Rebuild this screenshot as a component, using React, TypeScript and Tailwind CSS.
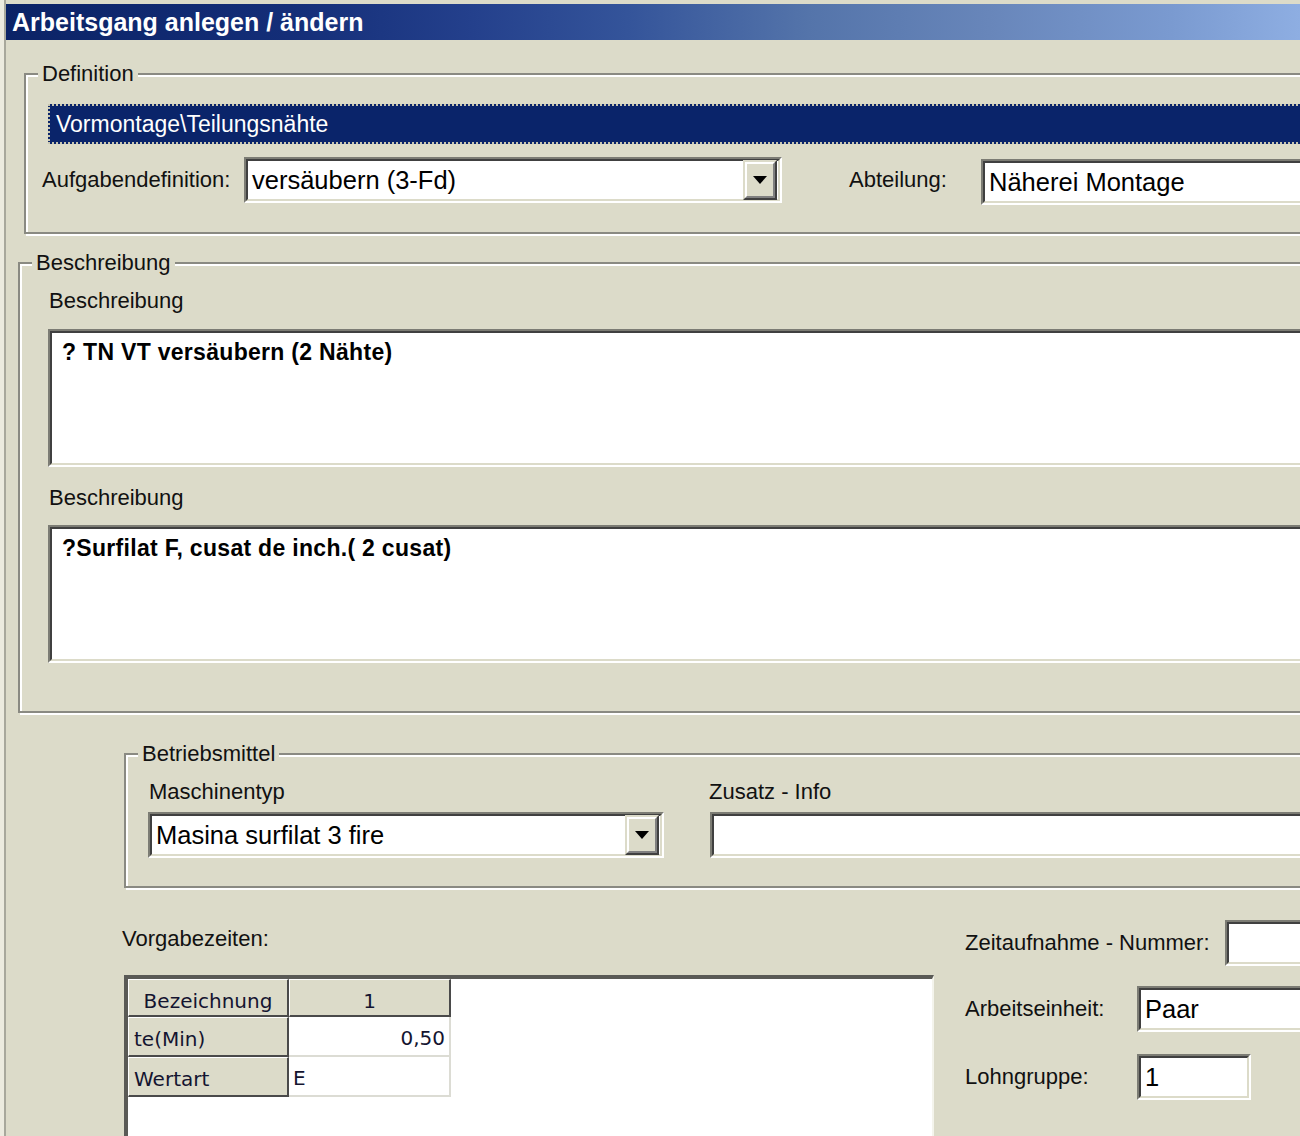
import type { ReactNode } from "react";

const face = "bg-[#dcdbc9]";

function Sunken({ className = "", children }: { className?: string; children?: ReactNode }) {
	return (
		<div className={"border-2 border-t-[#7c7c74] border-l-[#7c7c74] border-b-white border-r-white " + className}>
			<div className="h-full border-2 border-t-[#404040] border-l-[#404040] border-b-[#dcdbc9] border-r-[#dcdbc9] bg-white flex items-center">
				{children}
			</div>
		</div>
	);
}

function DropButton() {
	return (
		<div className="ml-auto mr-[1px] h-[40px] w-[34px] border-2 border-t-[#dcdbc9] border-l-[#dcdbc9] border-b-[#404040] border-r-[#404040] bg-[#dcdbc9]">
			<div className="h-full border-2 border-t-white border-l-white border-b-[#808080] border-r-[#808080] flex items-center justify-center">
				<svg width="14" height="8" viewBox="0 0 14 8">
					<path d="M0 0h14L7 8z" fill="#000" />
				</svg>
			</div>
		</div>
	);
}

function Group({
	title,
	className = "",
	inner = "",
	children,
}: {
	title: string;
	className?: string;
	inner?: string;
	children: ReactNode;
}) {
	return (
		<fieldset className={"border-2 border-[#8a8a82] shadow-[inset_2px_2px_0_#fff,2px_2px_0_#fff] mr-[-60px] " + className}>
			<legend className={"ml-[12px] px-[4px] text-[22px] leading-[26px] text-[#111] " + face}>{title}</legend>
			<div className={inner}>{children}</div>
		</fieldset>
	);
}

const label = "text-[22px] leading-[26px] text-[#111]";
const field = "text-[25.5px] leading-[28px] text-black pl-[4px]";
const memo = "self-start pt-[6px] pl-[10px] font-bold text-[23px] tracking-[0.3px] leading-[26px] text-black";
const head =
	"bg-[#dcdbc9] border-t border-l border-white border-r-2 border-b-2 border-r-[#4a4a4a] border-b-[#4a4a4a] flex items-center";

export default function App() {
	return (
		<div
			className={"w-[1300px] h-[1136px] overflow-hidden flex " + face}
			style={{ fontFamily: '"Liberation Sans", Arial, sans-serif' }}
		>
			<div className="w-[6px] shrink-0 bg-[#ecebdf] border-r-2 border-r-[#a8a89c]" />
			<div className="flex-1 flex flex-col min-w-0">
				<div className="mt-[4px] h-[36px] shrink-0 flex items-center pl-[6px] bg-[linear-gradient(to_right,#0b2366,#142e78_22%,#24408c_36%,#34549a_48%,#5474aa_62%,#6886ba_76%,#7a9ad0_90%,#8eaee2)]">
					<span className="text-white font-bold text-[25px] leading-none">Arbeitsgang anlegen / ändern</span>
				</div>

				<Group title="Definition" className="mt-[21px] ml-[18px]" inner="pl-[16px] pb-[28px]">
					<div className="mt-[17px] ml-[6px] h-[40px] bg-[#0a246a] border-2 border-dotted border-[#c8c6b0] flex items-center pl-[6px]">
						<span className="text-white text-[23px] leading-none">Vormontage\Teilungsnähte</span>
					</div>
					<div className="mt-[12px] flex items-center h-[48px]">
						<span className={label + " w-[202px]"}>Aufgabendefinition:</span>
						<Sunken className="w-[538px] h-[46px]">
							<span className={field}>versäubern (3-Fd)</span>
							<DropButton />
						</Sunken>
						<span className={label + " ml-[67px] w-[132px]"}>Abteilung:</span>
						<Sunken className="flex-1 h-[46px] mt-[4px]">
							<span className={field}>Näherei Montage</span>
						</Sunken>
					</div>
				</Group>

				<Group title="Beschreibung" className="mt-[16px] ml-[12px]" inner="pl-[28px] pb-[48px]">
					<div className={label + " mt-[12px] ml-[1px]"}>Beschreibung</div>
					<Sunken className="mt-[15px] h-[138px]">
						<div className={memo}>? TN VT versäubern (2 Nähte)</div>
					</Sunken>
					<div className={label + " mt-[18px] ml-[1px]"}>Beschreibung</div>
					<Sunken className="mt-[14px] h-[138px]">
						<div className={memo}>?Surfilat F, cusat de inch.( 2 cusat)</div>
					</Sunken>
				</Group>

				<Group title="Betriebsmittel" className="mt-[28px] ml-[118px]" inner="pl-[22px] pb-[28px]">
					<div className="flex">
						<div className="w-[516px] flex flex-col">
							<span className={label + " mt-[12px] ml-[1px]"}>Maschinentyp</span>
							<Sunken className="mt-[7px] h-[46px]">
								<span className={field}>Masina surfilat 3 fire</span>
								<DropButton />
							</Sunken>
						</div>
						<div className="ml-[46px] flex-1 flex flex-col">
							<span className={label + " mt-[12px] -ml-[1px]"}>Zusatz - Info</span>
							<Sunken className="mt-[7px] h-[46px]" />
						</div>
					</div>
				</Group>

				<div className="flex flex-1">
					<div className="ml-[116px] flex flex-col">
						<span className={label + " mt-[38px]"}>Vorgabezeiten:</span>
						<div className="mt-[23px] ml-[2px] w-[810px] flex-1 border-t-4 border-l-4 border-t-[#5a5a56] border-l-[#5a5a56] border-r-2 border-r-[#f4f4ec] bg-white">
							<div
								className="grid grid-cols-[161px_162px] text-[20px] text-[#141430]"
								style={{ fontFamily: '"DejaVu Sans", Verdana, sans-serif' }}
							>
								<div className={head + " h-[38px] justify-center pt-[6px]"}>Bezeichnung</div>
								<div className={head + " h-[38px] justify-center pt-[6px]"}>1</div>
								<div className={head + " h-[40px] pl-[5px] pt-[4px]"}>te(Min)</div>
								<div className="h-[40px] bg-white border-r-2 border-b-2 border-[#dcdcd4] flex items-center justify-end pr-[4px] pt-[4px]">
									0,50
								</div>
								<div className={head + " h-[40px] pl-[5px] pt-[4px]"}>Wertart</div>
								<div className="h-[40px] bg-white border-r-2 border-b-2 border-[#dcdcd4] flex items-center pl-[4px] pt-[4px]">
									E
								</div>
							</div>
						</div>
					</div>
					<div className="ml-[31px] flex flex-col">
						<div className="mt-[32px] flex items-center h-[46px]">
							<span className={label + " w-[260px]"}>Zeitaufnahme - Nummer:</span>
							<Sunken className="w-[100px] h-[46px]" />
						</div>
						<div className="mt-[20px] flex items-center h-[46px]">
							<span className={label + " w-[172px]"}>Arbeitseinheit:</span>
							<Sunken className="w-[200px] h-[46px]">
								<span className={field}>Paar</span>
							</Sunken>
						</div>
						<div className="mt-[22px] flex items-center h-[46px]">
							<span className={label + " w-[172px]"}>Lohngruppe:</span>
							<Sunken className="w-[114px] h-[46px]">
								<span className={field}>1</span>
							</Sunken>
						</div>
					</div>
				</div>
			</div>
		</div>
	);
}
